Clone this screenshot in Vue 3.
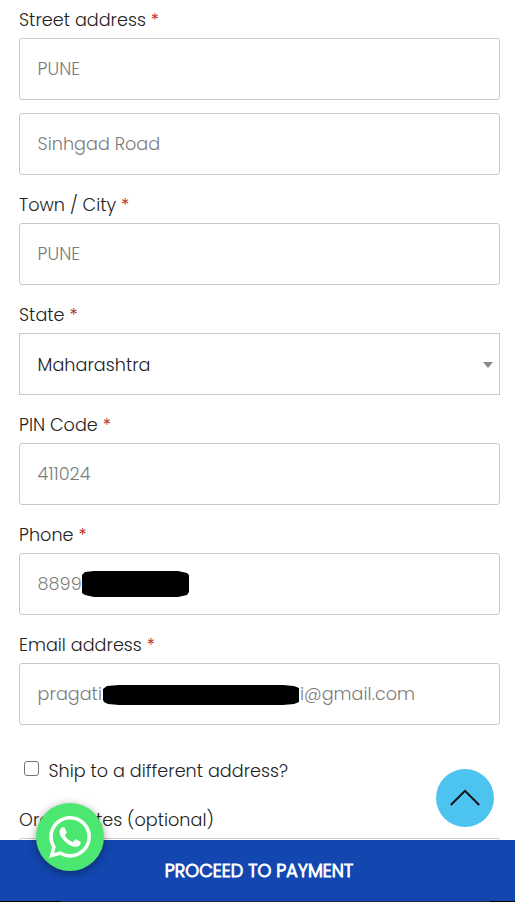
<script setup>
const fields = [
  { id: 'street', label: 'Street address', value: 'PUNE' },
  { id: 'street2', value: 'Sinhgad Road' },
  { id: 'city', label: 'Town / City', value: 'PUNE' },
  { id: 'state', label: 'State', value: 'Maharashtra', select: true },
  { id: 'pin', label: 'PIN Code', value: '411024' },
  { id: 'phone', label: 'Phone', value: '8899', mask: 'phone' },
  { id: 'email', label: 'Email address', value: 'pragati', mask: 'email', tail: 'i@gmail.com' },
]
</script>

<template>
  <main class="page">
    <form class="form">
      <div v-for="f in fields" :key="f.id" class="field">
        <label v-if="f.label" class="label">{{ f.label }} <span class="star">*</span></label>
        <div class="control" :class="{ select: f.select }">
          <span class="value" :class="f.mask">{{ f.value }}</span>
          <svg v-if="f.mask === 'phone'" class="mask" width="107" height="26" viewBox="0 0 107 26">
            <path d="M12 0H96L105 2L107 4V21L105 24L96 26H12L3 24L0 22V4L3 1Z" />
          </svg>
          <svg v-if="f.mask === 'email'" class="mask email-mask" width="196" height="20" viewBox="0 0 196 20">
            <path d="M16 0H180L191 1L196 3V17L191 19L180 20H16L5 19L1 17L0 15V4L4 1Z" />
          </svg>
          <span v-if="f.tail" class="value tail">{{ f.tail }}</span>
          <svg v-if="f.select" class="caret" width="10" height="6" viewBox="0 0 10 6"><path d="M0 0H10L5 6Z" /></svg>
        </div>
      </div>
      <label class="ship"><span class="box"></span><span class="ship-text">Ship to a different address?</span></label>
      <div class="notes-label">Order notes (optional)</div>
      <div class="notes"></div>
    </form>

    <button class="top" type="button" aria-label="Back to top">
      <svg width="58" height="58" viewBox="0 0 58 58"><path d="M14.8 36L29 21.8L43.2 36" /></svg>
    </button>
    <footer class="pay"><span class="pay-text">PROCEED TO PAYMENT</span></footer>
    <a class="chat" aria-label="WhatsApp">
      <svg width="42" height="42" viewBox="0 0 24 24">
        <path d="M17.472 14.382c-.297-.149-1.758-.867-2.03-.967-.273-.099-.471-.148-.67.15-.197.297-.767.966-.94 1.164-.173.199-.347.223-.644.075-.297-.15-1.255-.463-2.39-1.475-.883-.788-1.48-1.761-1.653-2.059-.173-.297-.018-.458.13-.606.134-.133.298-.347.446-.52.149-.174.198-.298.298-.497.099-.198.05-.371-.025-.52-.075-.149-.669-1.612-.916-2.207-.242-.579-.487-.5-.669-.51-.173-.008-.371-.01-.57-.01-.198 0-.52.074-.792.372-.272.297-1.04 1.016-1.04 2.479 0 1.462 1.065 2.875 1.213 3.074.149.198 2.096 3.2 5.077 4.487.709.306 1.262.489 1.694.625.712.227 1.36.195 1.871.118.571-.085 1.758-.719 2.006-1.413.248-.694.248-1.289.173-1.413-.074-.124-.272-.198-.57-.347m-5.421 7.403h-.004a9.87 9.87 0 0 1-5.031-1.378l-.361-.214-3.741.982.998-3.648-.235-.374a9.86 9.86 0 0 1-1.51-5.26c.001-5.45 4.436-9.884 9.888-9.884 2.64 0 5.122 1.03 6.988 2.898a9.825 9.825 0 0 1 2.893 6.994c-.003 5.45-4.437 9.884-9.885 9.884m8.413-18.297A11.815 11.815 0 0 0 12.05 0C5.495 0 .16 5.335.157 11.892c0 2.096.547 4.142 1.588 5.945L.057 24l6.305-1.654a11.882 11.882 0 0 0 5.683 1.448h.005c6.554 0 11.89-5.335 11.893-11.893a11.821 11.821 0 0 0-3.48-8.413Z" />
      </svg>
    </a>
  </main>
</template>

<style>
body { background: #fff; }
</style>

<style scoped>
.page {
  position: relative;
  height: 902px;
  overflow: hidden;
  background: #fff;
  color: #222;
  font-family: Poppins, Inter, sans-serif;
  font-size: 17.6px;
  font-weight: 300;
  letter-spacing: 0.03px;
}
.form { display: flex; flex-direction: column; padding: 2px 15px 0 19px; }
.field { margin-bottom: 13px; }
.label { display: block; height: 36px; line-height: 36px; }
.field:nth-child(n + 2) .label { height: 35px; line-height: 34px; }
.star { color: #b01c1c; }
.control {
  display: flex;
  align-items: center;
  box-sizing: border-box;
  height: 62px;
  padding: 0 6px 0 17.6px;
  border: 1px solid #c8c8c8;
  border-radius: 3px;
  color: #7c7c7c;
}
.select { border-radius: 0; color: #222; }
.select .value { padding-top: 2px; }
.value { flex: none; white-space: nowrap; }
.value.phone { width: 44.4px; }
.value.email { width: 65.4px; }
.mask { flex: none; fill: #000; }
.email-mask { margin-top: 2px; }
.mask + .tail { margin-left: 1px; }
.caret { margin-left: auto; margin-top: 1px; fill: #888; }
.ship { display: flex; align-items: center; height: 26px; margin-top: 20px; padding-left: 5px; }
.box { box-sizing: border-box; width: 15px; height: 15px; margin: 0 9.5px 5px 0; border: 1px solid #767676; border-radius: 3px; }
.notes-label { height: 36px; margin-top: 18px; line-height: 36px; }
.notes { height: 80px; border: 1px solid #c8c8c8; border-radius: 3px; }
.top {
  position: absolute;
  left: 436px;
  top: 769px;
  width: 58px;
  height: 58px;
  padding: 0;
  border: 0;
  border-radius: 50%;
  background: #4dc4ef;
}
.top svg { display: block; fill: none; stroke: #111; stroke-width: 2; }
.pay {
  position: absolute;
  inset: 840px 0 0;
  display: flex;
  align-items: center;
  justify-content: center;
  background: linear-gradient(90deg, #000 60px, #222c3c 60px 490px, #000 490px) bottom / 100% 1px no-repeat, #1346af;
  color: #fff;
}
.pay-text { margin-left: 3px; letter-spacing: 0.1px; -webkit-text-stroke: 1px #fff; }
.chat {
  position: absolute;
  left: 36px;
  top: 803px;
  display: grid;
  place-items: center;
  width: 68px;
  height: 68px;
  border-radius: 50%;
  background: #4ce770;
  box-shadow: 0 2px 8px rgba(0, 0, 0, 0.4);
}
.chat svg { fill: #fff; }
</style>
